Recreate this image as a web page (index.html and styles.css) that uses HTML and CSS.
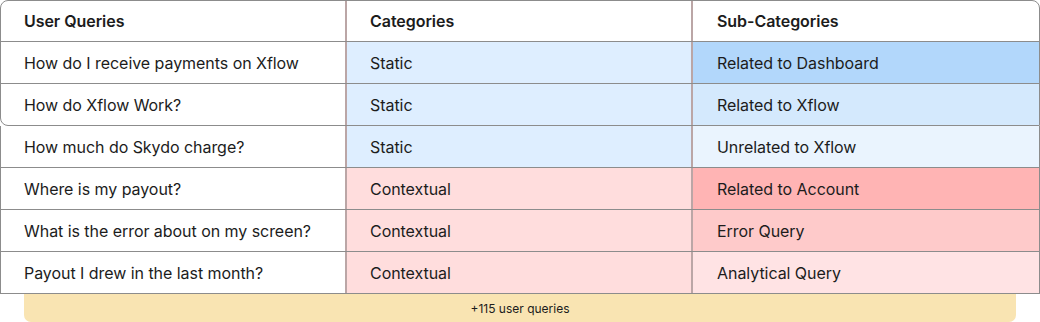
FILE: index.html
```html
<!DOCTYPE html>
<html>
<head>
<meta charset="utf-8">
<link rel="stylesheet" href="styles.css">
</head>
<body>
<div class="table">
  <div class="top">
    <div class="row head">
      <div class="cell">User Queries</div>
      <div class="cell">Categories</div>
      <div class="cell">Sub-Categories</div>
    </div>
    <div class="row">
      <div class="cell">How do I receive payments on Xflow</div>
      <div class="cell static">Static</div>
      <div class="cell blue1">Related to Dashboard</div>
    </div>
    <div class="row last">
      <div class="cell">How do Xflow Work?</div>
      <div class="cell static">Static</div>
      <div class="cell blue2">Related to Xflow</div>
    </div>
  </div>
  <div class="bottom">
    <div class="row">
      <div class="cell">How much do Skydo charge?</div>
      <div class="cell static">Static</div>
      <div class="cell blue3">Unrelated to Xflow</div>
    </div>
    <div class="row">
      <div class="cell">Where is my payout?</div>
      <div class="cell ctx">Contextual</div>
      <div class="cell red1">Related to Account</div>
    </div>
    <div class="row">
      <div class="cell">What is the error about on my screen?</div>
      <div class="cell ctx">Contextual</div>
      <div class="cell red2">Error Query</div>
    </div>
    <div class="row">
      <div class="cell">Payout I drew in the last month?</div>
      <div class="cell ctx">Contextual</div>
      <div class="cell red3">Analytical Query</div>
    </div>
  </div>
  <div class="more">+115 user queries</div>
</div>
</body>
</html>
```
FILE: styles.css
```css
html, body {
  margin: 0;
  padding: 0;
  background: #ffffff;
}
body {
  font-family: Inter, "Noto Sans", sans-serif;
  color: #1c1c1c;
  width: 1040px;
  height: 322px;
  overflow: hidden;
}
.table {
  display: flex;
  flex-direction: column;
  width: 1040px;
}
.top {
  border: 1px solid #8c8c8c;
  border-radius: 8px 8px 0 8px;
  overflow: hidden;
}
.bottom {
  border-left: 1px solid #8c8c8c;
  border-right: 1px solid #8c8c8c;
}
.row {
  display: grid;
  grid-template-columns: 346px 346px 1fr;
  height: 42px;
  border-bottom: 1px solid #8c8c8c;
  box-sizing: border-box;
}
.top .row.head {
  height: 41px;
}
.top .row.last {
  border-bottom: none;
  height: 41px;
}
.cell {
  display: flex;
  align-items: center;
  padding-left: 23px;
  font-size: 16px;
  letter-spacing: -0.05px;
  box-sizing: border-box;
  border-right: 2px solid #bba6a6;
}
.cell:last-child {
  border-right: none;
  padding-left: 24px;
}
.head .cell {
  font-weight: 600;
}
.static { background: #deeeff; }
.ctx { background: #ffdddd; }
.blue1 { background: #b2d7fb; }
.blue2 { background: #d4e9fd; }
.blue3 { background: #eaf4fe; }
.red1 { background: #ffb4b4; }
.red2 { background: #fecaca; }
.red3 { background: #ffe3e4; }
.more {
  margin: 0 24px;
  height: 28px;
  background: #f9e4b2;
  border-radius: 0 0 7px 7px;
  display: flex;
  align-items: center;
  justify-content: center;
  font-size: 12px;
  color: #1c1c1c;
}
```
